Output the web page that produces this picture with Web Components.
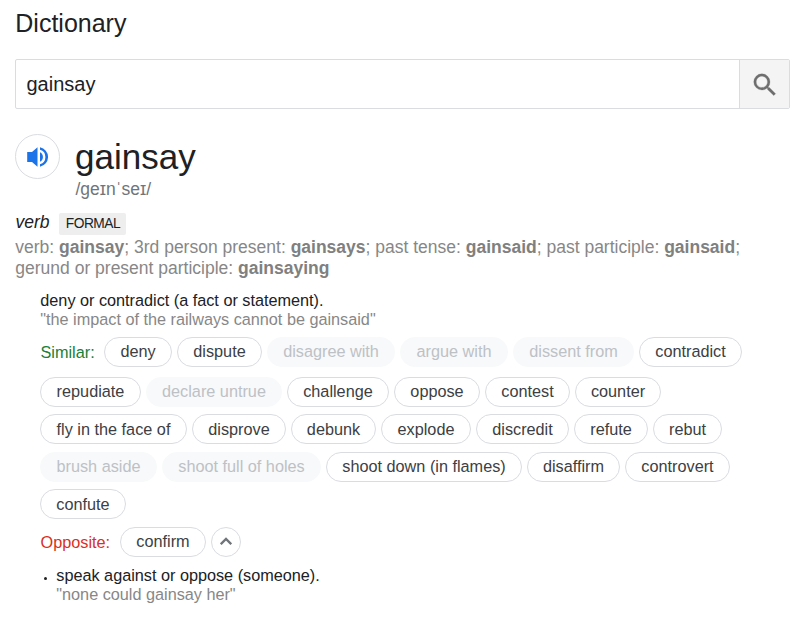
<!DOCTYPE html>
<html lang="en">
<head>
<meta charset="utf-8">
<title>Dictionary</title>
<style>
body { margin: 0; background: #fff; font-family: "Liberation Sans", Arial, sans-serif; color: #202124; }
</style>
</head>
<body>
<dictionary-card></dictionary-card>
<script>
const define = (name, html) => customElements.define(name, class extends HTMLElement {
  constructor() {
    super();
    const t = document.createElement('template');
    t.innerHTML = html;
    this.attachShadow({ mode: 'open' }).append(t.content.cloneNode(true));
  }
});

define('search-field', `
<style>
:host { display: flex; box-sizing: border-box; height: 50px; border: 1px solid #dadce0; border-radius: 2px; overflow: hidden; }
.query { flex: 1; padding-left: 10.500px; font-size: 20px; line-height: 48px; }
.go { width: 49px; border-left: 1px solid #dadce0; background: #f4f4f4; display: flex; align-items: center; justify-content: center; }
svg { width: 30px; height: 30px; margin-top: 1px; fill: #6e6e6e; stroke: #6e6e6e; stroke-width: .2; display: block; }
</style>
<div class="query"><slot></slot></div>
<div class="go"><svg viewBox="0 0 24 24"><path d="M15.5 14h-.79l-.28-.27A6.47 6.47 0 0 0 16 9.5 6.5 6.5 0 1 0 9.5 16c1.61 0 3.09-.59 4.23-1.57l.27.28v.79l5 4.99L20.49 19zm-6 0C7.01 14 5 11.99 5 9.5S7.01 5 9.5 5 14 7.01 14 9.5 11.99 14 9.5 14z"/></svg></div>`);

define('word-heading', `
<style>
:host { display: flex; gap: 15px; height: 67px; }
.sound { box-sizing: border-box; width: 45px; height: 45px; border: 1px solid #dadce0; border-radius: 50%; display: flex; align-items: center; justify-content: center; }
svg { width: 21px; height: 20px; fill: #1a73e8; display: block; }
.word { padding-top: 2px; font-size: 35px; line-height: 42px; }
.ipa { padding-left: .5px; color: #70757a; font-size: 17.5px; line-height: 22px; }
</style>
<div class="sound"><svg viewBox="0 0 21 20"><path d="M.2 5v10h4.800l5.500 4.800V.2L5 5zM13 5.200v9.600a5.400 5.400 0 0 0 0-9.600zM13 .2v2.600a7.500 7.500 0 0 1 0 14.400v2.600a10 10 0 0 0 0-19.600z"/></svg></div>
<div><div class="word"><slot></slot></div><div class="ipa"><slot name="ipa"></slot></div></div>`);

define('register-tag', `
<style>:host { display: block; box-sizing: border-box; width: 67px; height: 22px; border-radius: 2px; background: #eee; text-align: center; font-size: 13.75px; line-height: 21px; letter-spacing: -.5px; padding-left: 1px; }</style><slot></slot>`);

define('word-sense', `
<style>
:host { display: block; font-size: 16.25px; line-height: 19px; letter-spacing: -.01px; padding-left: .3px; }
.example { color: #878787; }
</style>
<div class="meaning"><slot></slot></div><div class="example"><slot name="example"></slot></div>`);

define('chip-row', `
<style>
:host { display: flex; gap: 5px; height: 30px; align-items: center; }
::slotted(span) { flex: none; box-sizing: border-box; padding-left: .5px; font-size: 16.25px; line-height: 30px; }
::slotted(.similar) { width: 59px; color: #188038; }
::slotted(.opposite) { width: 75px; color: #d93025; }
</style><slot></slot>`);

customElements.define('word-chip', class extends HTMLElement {
  constructor() {
    super();
    this.attachShadow({ mode: 'open' }).innerHTML = `
<style>
:host { display: block; flex: none; box-sizing: border-box; height: 30px; border: 1px solid #dadce0; border-radius: 15px; color: #3c4043; font-size: 16.25px; line-height: var(--chip-line, 27px); text-align: center; white-space: nowrap; }
:host([muted]) { border-color: #f8f9fa; background: #f8f9fa; color: #bdc1c6; }
</style><slot></slot>`;
  }
  connectedCallback() { this.style.width = this.getAttribute('width') + 'px'; }
});

define('collapse-button', `
<style>
:host { display: flex; box-sizing: border-box; width: 30px; height: 30px; border: 1px solid #dadce0; border-radius: 50%; align-items: center; justify-content: center; }
svg { width: 12px; height: 8px; margin: 0 1px 2px 0; fill: none; stroke: #70757a; stroke-width: 2.300; }
</style><svg viewBox="0 0 12 8"><path d="M.8 7.200L6 2l5.200 5.200"/></svg>`);

define('dictionary-card', `
<style>
:host { display: block; box-sizing: border-box; height: 626px; padding: 9px 10px 0 15px; overflow: hidden; }
h1 { margin: 0 0 21px; padding-left: .3px; font-size: 25px; line-height: 29px; font-weight: 400; }
word-heading { margin-top: 25px; }
.pos { display: flex; gap: 9.500px; margin-top: 11px; height: 24px; align-items: center; padding-left: .5px; }
i { width: 34px; font-size: 17.5px; line-height: 20px; margin-top: -4px; }
.forms { margin: 1px 0 0; padding: 0 0 0 .3px; color: #878787; font-size: 17.5px; line-height: 21px; white-space: nowrap; }
.forms b { color: #808080; }
.body { padding-left: 25px; margin-top: 12px; }
.chips { margin-top: 8px; display: grid; }
.chips chip-row { margin-bottom: 7px; }
.chips chip-row:first-child { margin-bottom: 10px; }
.chips chip-row:nth-child(3), .chips chip-row:nth-child(5) { --chip-line: 29px; margin-bottom: 8px; }
.chips chip-row:last-child { margin-bottom: 0; }
.second { display: flex; margin-top: 9px; }
.dot { width: 3px; height: 3px; border-radius: 50%; background: #202124; margin: 11px 9px 0 4px; }
</style>
<h1>Dictionary</h1>
<search-field>gainsay</search-field>
<word-heading>gainsay<span slot="ipa">/ɡeɪnˈseɪ/</span></word-heading>
<div class="pos"><i>verb</i><register-tag>FORMAL</register-tag></div>
<p class="forms">verb: <b>gainsay</b>; 3rd person present: <b>gainsays</b>; past tense: <b>gainsaid</b>; past participle: <b>gainsaid</b>;<br>gerund or present participle: <b>gainsaying</b></p>
<div class="body">
<word-sense>deny or contradict (a fact or statement).<span slot="example">"the impact of the railways cannot be gainsaid"</span></word-sense>
<div class="chips">
<chip-row><span class="similar">Similar:</span><word-chip width="68">deny</word-chip><word-chip width="85">dispute</word-chip><word-chip muted width="128">disagree with</word-chip><word-chip muted width="108">argue with</word-chip><word-chip muted width="121">dissent from</word-chip><word-chip width="103">contradict</word-chip></chip-row>
<chip-row><word-chip width="101">repudiate</word-chip><word-chip muted width="136">declare untrue</word-chip><word-chip width="102">challenge</word-chip><word-chip width="86">oppose</word-chip><word-chip width="85">contest</word-chip><word-chip width="86">counter</word-chip></chip-row>
<chip-row><word-chip width="147">fly in the face of</word-chip><word-chip width="94">disprove</word-chip><word-chip width="85">debunk</word-chip><word-chip width="90">explode</word-chip><word-chip width="93">discredit</word-chip><word-chip width="74">refute</word-chip><word-chip width="69">rebut</word-chip></chip-row>
<chip-row><word-chip muted width="117">brush aside</word-chip><word-chip muted width="159">shoot full of holes</word-chip><word-chip width="196">shoot down (in flames)</word-chip><word-chip width="93">disaffirm</word-chip><word-chip width="105">controvert</word-chip></chip-row>
<chip-row><word-chip width="86">confute</word-chip></chip-row>
<chip-row><span class="opposite">Opposite:</span><word-chip width="86">confirm</word-chip><collapse-button></collapse-button></chip-row>
</div>
<div class="second"><div class="dot"></div><word-sense>speak against or oppose (someone).<span slot="example">"none could gainsay her"</span></word-sense></div>
</div>`);
</script>
</body>
</html>
